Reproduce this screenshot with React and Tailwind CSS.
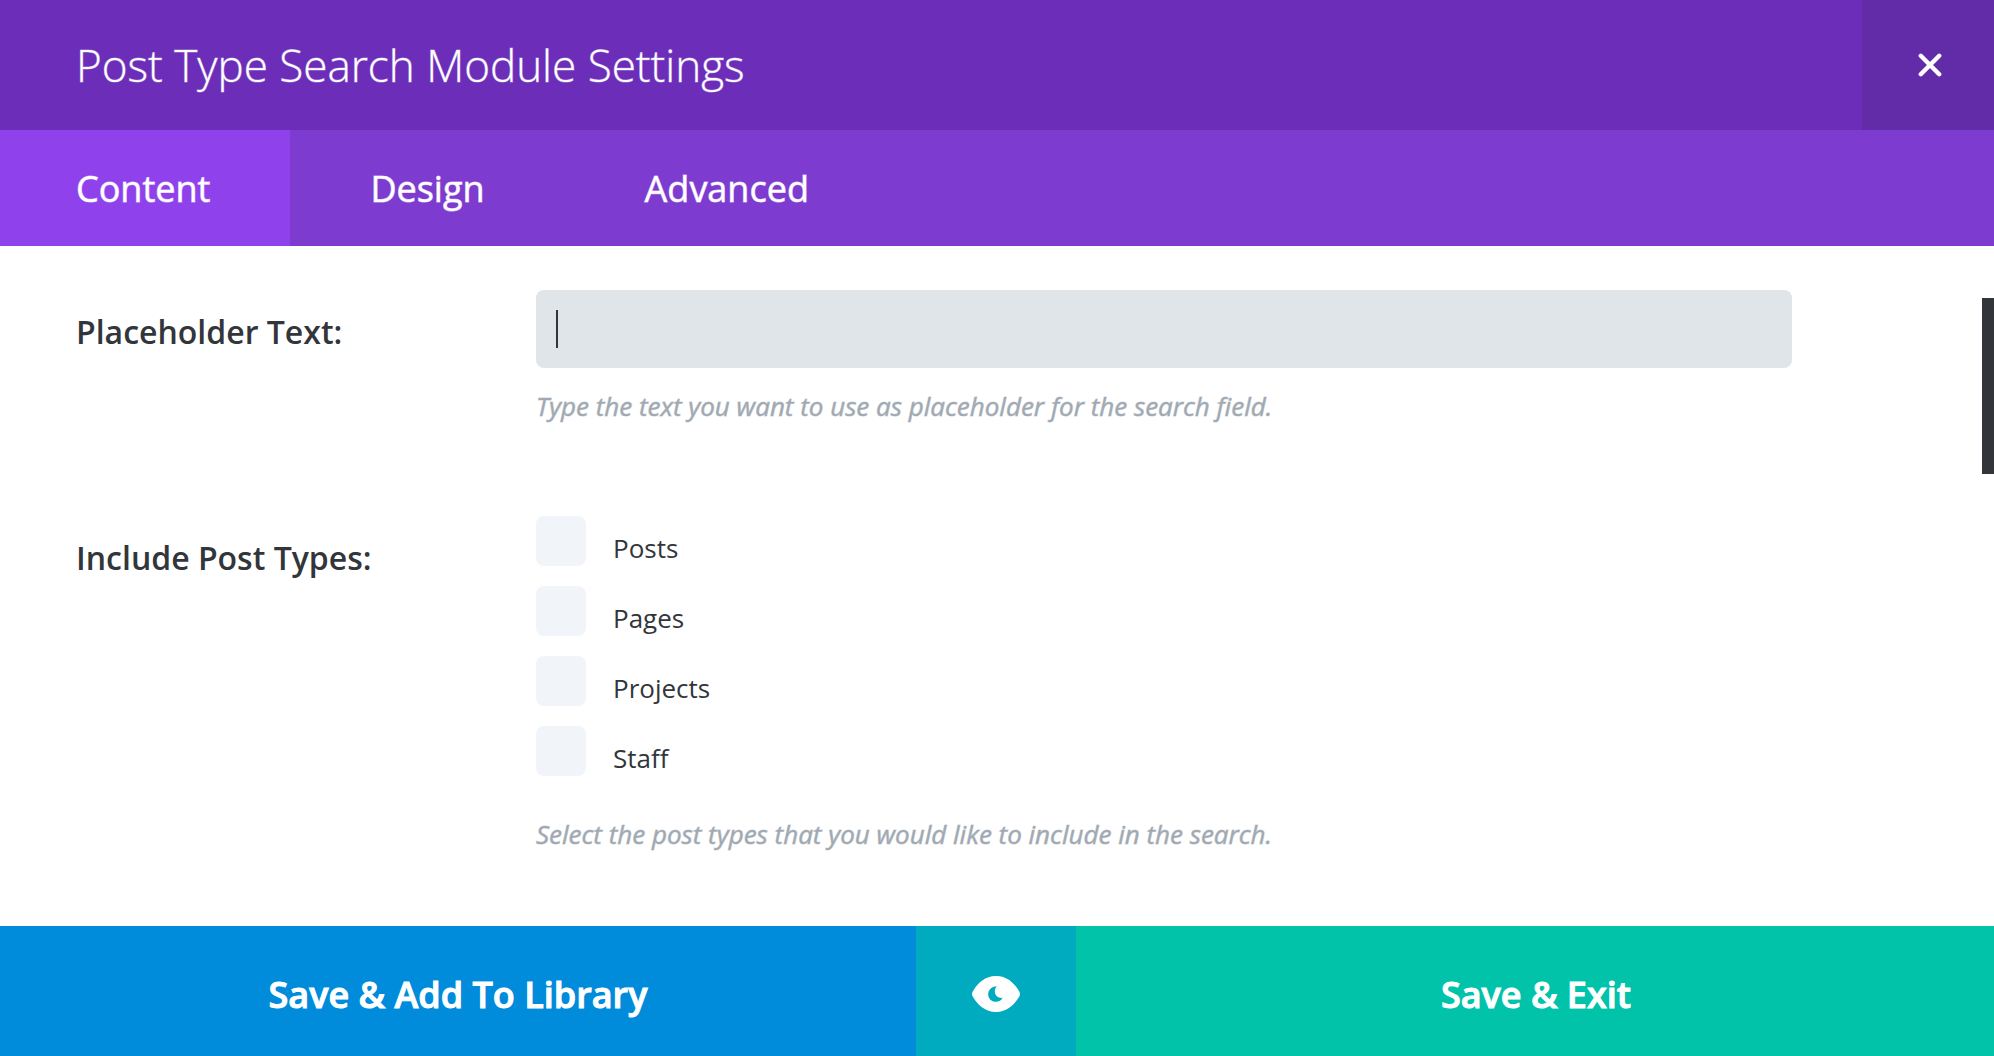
import { useState } from 'react';

const TABS = ['Content', 'Design', 'Advanced'];
const POST_TYPES = ['Posts', 'Pages', 'Projects', 'Staff'];

function CloseIcon() {
  return (
    <svg viewBox="0 0 24 24" className="w-6 h-6" fill="none" stroke="currentColor" strokeWidth="4.4" strokeLinecap="round">
      <path d="M2.8 2.8 21.2 21.2M21.2 2.8 2.8 21.2" />
    </svg>
  );
}

function PreviewIcon() {
  return (
    <svg viewBox="0 0 48 36" className="w-12 h-9">
      <path
        fill="currentColor"
        fillRule="evenodd"
        d="M24 0C35 0 42 7 46.500 14.200Q49.500 18 46.500 21.800C42 29 35 36 24 36S6 29 1.500 21.800Q-1.500 18 1.500 14.200C6 7 13 0 24 0ZM24.800 10.200C19.500 10.500 16.200 14 16.200 18.200C16.200 22.600 19.500 25.800 23.700 25.800C27 25.800 29.500 24.200 30.600 21.800C26.200 22.600 22.800 19.400 22.800 15.600C22.800 13.400 23.500 11.600 24.800 10.200Z"
      />
    </svg>
  );
}

function Field({ label, htmlFor, labelId, children }) {
  const Label = htmlFor ? 'label' : 'div';
  return (
    <div className="flex items-start">
      <Label id={labelId} htmlFor={htmlFor} className="w-[460px] shrink-0 pt-5 text-[32px] leading-[44px] font-semibold">
        {label}
      </Label>
      <div className="flex-1">{children}</div>
    </div>
  );
}

function HelpText({ children }) {
  return (
    <p className="pt-5 text-[26px] leading-[36px] italic text-[#a0a9b2] [-webkit-text-stroke:1px_#a0a9b280]">
      {children}
    </p>
  );
}

export default function App() {
  const [activeTab, setActiveTab] = useState('Content');
  const [placeholder, setPlaceholder] = useState('');
  const [included, setIncluded] = useState([]);

  const toggleType = (type) => {
    setIncluded((prev) => (prev.includes(type) ? prev.filter((t) => t !== type) : [...prev, type]));
  };

  return (
    <div className="min-h-screen flex flex-col bg-white text-[#32363b] font-['Open_Sans',sans-serif]">
      <header className="flex h-[130px] bg-[#6c2eb9] text-white">
        <h1 className="flex-1 flex items-center pl-[76px] text-[44px] font-light [-webkit-text-stroke:1px_#ffffff66]">
          Post Type Search Module Settings
        </h1>
        <button type="button" aria-label="Close" className="w-[132px] flex items-center justify-center bg-[#622ba8] pl-1">
          <CloseIcon />
        </button>
      </header>

      <nav className="flex h-[116px] bg-[#7e3bd0] text-white">
        {TABS.map((tab) => (
          <button
            key={tab}
            type="button"
            onClick={() => setActiveTab(tab)}
            className={`px-20 first:pl-[76px] pt-[2px] text-[36px] [-webkit-text-stroke:1px_#ffffff99] ${activeTab === tab ? 'bg-[#8f42ec]' : ''}`}
          >
            {tab}
          </button>
        ))}
      </nav>

      <main className="relative flex-1 flex flex-col gap-[92px] pl-[76px] pr-[202px] pt-11">
        <Field label="Placeholder Text:" htmlFor="placeholder-text">
          <div className="relative">
            <input
              id="placeholder-text"
              type="text"
              value={placeholder}
              onChange={(e) => setPlaceholder(e.target.value)}
              className="block w-full h-[78px] px-5 rounded-lg bg-[#dfe5e9] text-[26px] caret-transparent outline-none"
            />
            {/* Text cursor */}
            {!placeholder && <span className="absolute left-5 top-5 w-[2px] h-[38px] bg-[#32363b]" />}
          </div>
          <HelpText>Type the text you want to use as placeholder for the search field.</HelpText>
        </Field>

        <Field label="Include Post Types:" labelId="post-types-label">
          <div role="group" aria-labelledby="post-types-label" className="flex flex-col gap-5 pb-5">
            {POST_TYPES.map((type) => (
              <label key={type} className="flex items-start gap-[27px] h-[50px]">
                <input
                  type="checkbox"
                  checked={included.includes(type)}
                  onChange={() => toggleType(type)}
                  className="appearance-none w-[50px] h-[50px] rounded-lg bg-[#f1f5fa] checked:bg-[#008bdb]"
                />
                <span className="pt-3 text-[26px] leading-[40px]">{type}</span>
              </label>
            ))}
          </div>
          <HelpText>Select the post types that you would like to include in the search.</HelpText>
        </Field>

        {/* Scrollbar thumb */}
        <div className="absolute right-0 top-[52px] w-3 h-44 bg-[#32363b]" />
      </main>

      <footer className="flex h-[130px] text-white text-[36px] font-semibold [-webkit-text-stroke:1px_white]">
        <button type="button" className="flex-1 bg-[#008bdb] pt-2">Save &amp; Add To Library</button>
        <button type="button" aria-label="Preview" className="w-40 flex items-center justify-center bg-[#00abbf] pt-[6px]">
          <PreviewIcon />
        </button>
        <button type="button" className="flex-1 bg-[#00c3aa] pt-2 pl-[2px]">Save &amp; Exit</button>
      </footer>
    </div>
  );
}
